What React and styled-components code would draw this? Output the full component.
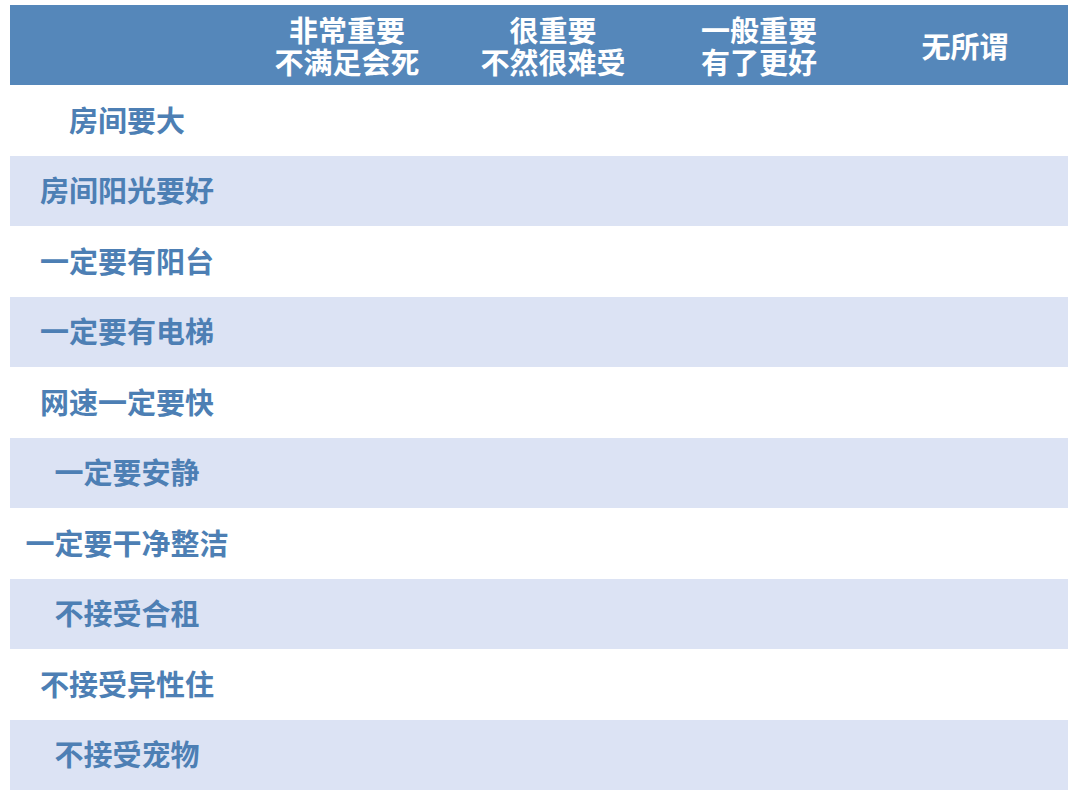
import React from 'react';
import styled, { createGlobalStyle } from 'styled-components';

const GlobalStyle = createGlobalStyle`
  html, body {
    margin: 0;
    padding: 0;
    background: #fff;
  }
  body {
    font-family: "Noto Sans CJK SC", "Noto Sans", sans-serif;
  }
`;

const Page = styled.div`
  width: 1080px;
  height: 805px;
  padding: 5px 0 0 10px;
  box-sizing: border-box;
`;

const Table = styled.div`
  width: 1058px;
  display: grid;
  grid-template-columns: 234px repeat(4, 206px);
`;

const HeadCell = styled.div`
  height: 80px;
  background: #5587ba;
  color: #fff;
  display: flex;
  flex-direction: column;
  align-items: center;
  justify-content: center;
  gap: 0;
  text-align: center;
  font-size: 29px;
  font-weight: 700;
  line-height: 33px;
  box-sizing: border-box;
`;

const HeadLine = styled.span`
  display: block;
  height: 32px;
  line-height: 32px;
`;

const Cell = styled.div`
  height: 70.5px;
  background: ${(p) => (p.shaded ? '#dce3f4' : '#fff')};
  display: flex;
  align-items: center;
  justify-content: center;
  color: #4d7fb4;
  font-size: 29px;
  font-weight: 700;
  padding-bottom: 3px;
  box-sizing: border-box;
`;

const headers = [
  [],
  ['非常重要', '不满足会死'],
  ['很重要', '不然很难受'],
  ['一般重要', '有了更好'],
  ['无所谓'],
];

const rows = [
  '房间要大',
  '房间阳光要好',
  '一定要有阳台',
  '一定要有电梯',
  '网速一定要快',
  '一定要安静',
  '一定要干净整洁',
  '不接受合租',
  '不接受异性住',
  '不接受宠物',
];

const App = () => (
  <Page>
    <GlobalStyle />
    <Table>
      {headers.map((h, i) => (
        <HeadCell key={i}>
          {h.map((line) => (
            <HeadLine key={line}>{line}</HeadLine>
          ))}
        </HeadCell>
      ))}
      {rows.map((label, r) => (
        <React.Fragment key={label}>
          <Cell shaded={r % 2 === 1}>{label}</Cell>
          {[0, 1, 2, 3].map((c) => (
            <Cell key={c} shaded={r % 2 === 1} />
          ))}
        </React.Fragment>
      ))}
    </Table>
  </Page>
);

export default App;
